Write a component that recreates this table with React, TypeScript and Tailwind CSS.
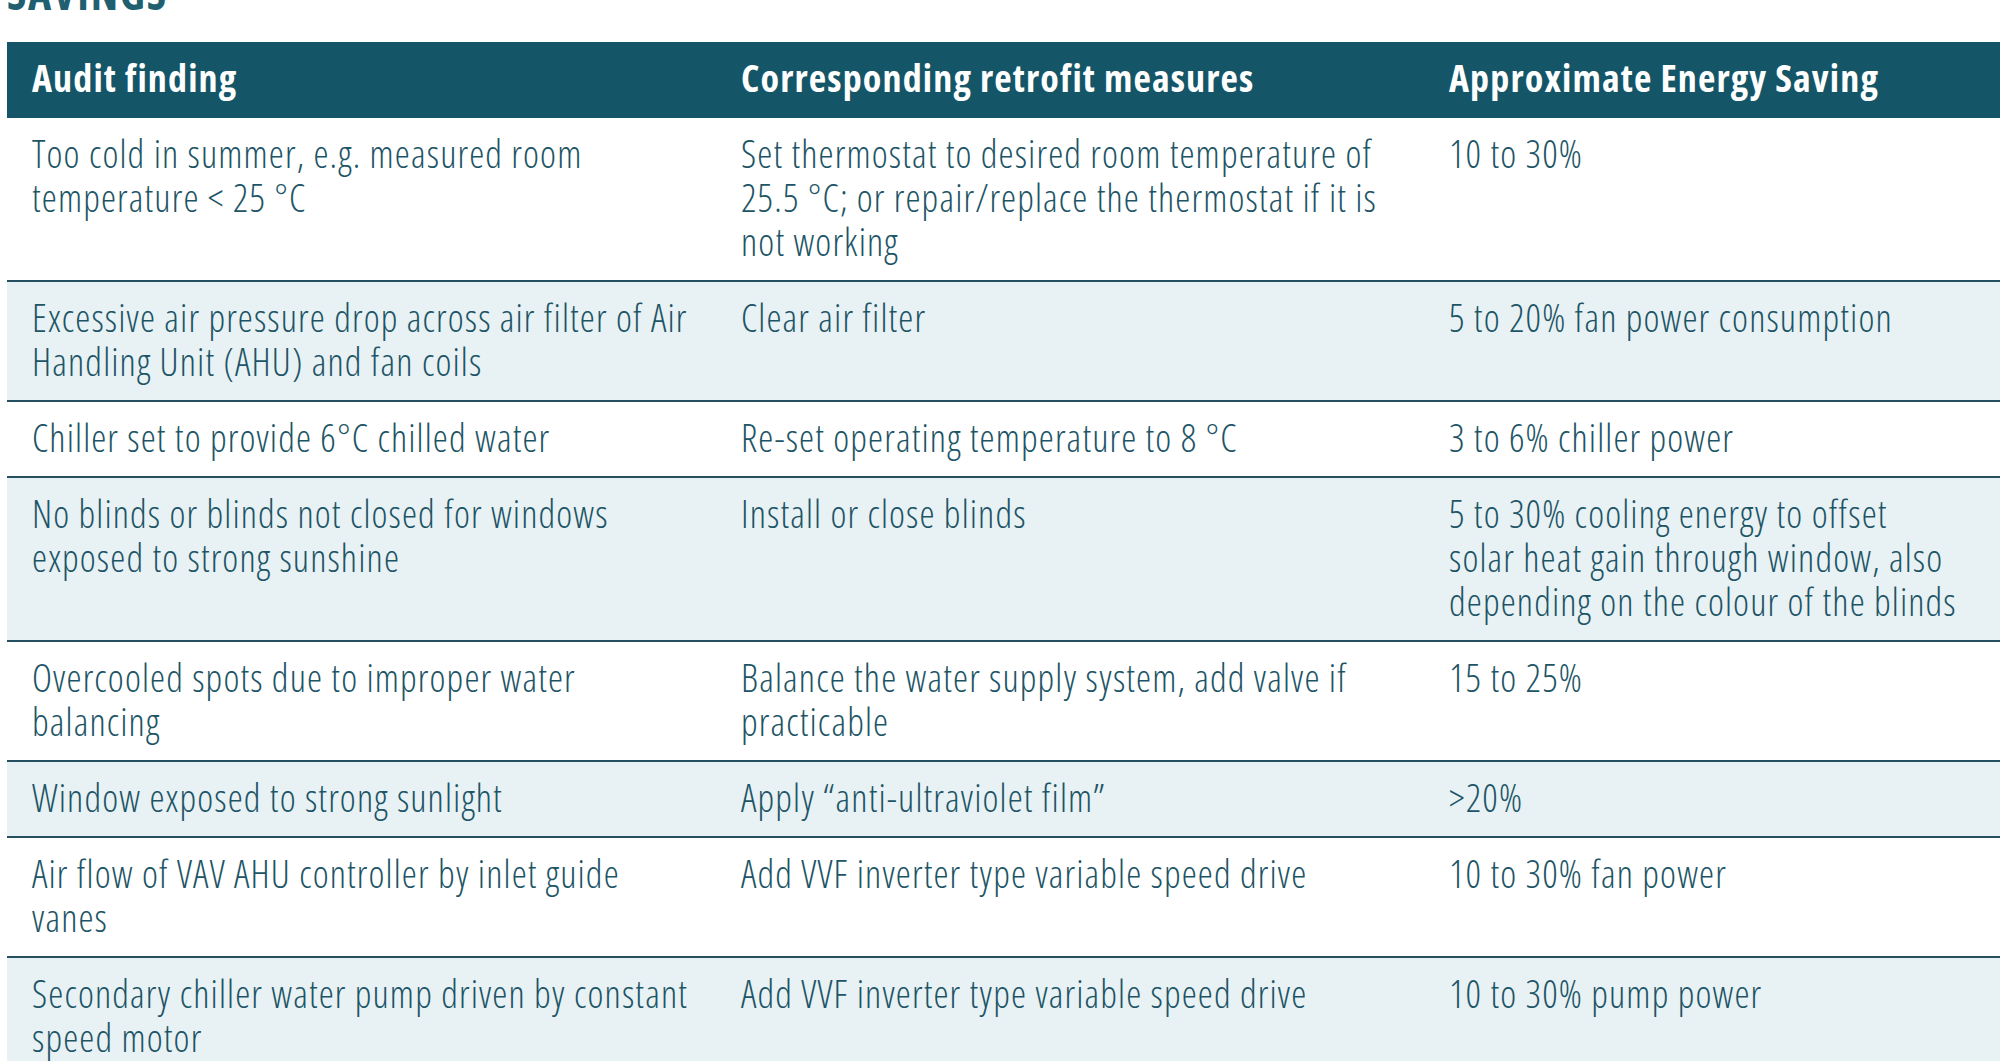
import React from "react";

interface Row {
  finding: string[];
  measure: string[];
  saving: string[];
}

const rows: Row[] = [
  {
    finding: ["Too cold in summer, e.g. measured room", "temperature < 25 °C"],
    measure: [
      "Set thermostat to desired room temperature of",
      "25.5 °C; or repair/replace the thermostat if it is",
      "not working",
    ],
    saving: ["10 to 30%"],
  },
  {
    finding: [
      "Excessive air pressure drop across air filter of Air",
      "Handling Unit (AHU) and fan coils",
    ],
    measure: ["Clear air filter"],
    saving: ["5 to 20% fan power consumption"],
  },
  {
    finding: ["Chiller set to provide 6°C chilled water"],
    measure: ["Re-set operating temperature to 8 °C"],
    saving: ["3 to 6% chiller power"],
  },
  {
    finding: ["No blinds or blinds not closed for windows", "exposed to strong sunshine"],
    measure: ["Install or close blinds"],
    saving: [
      "5 to 30% cooling energy to offset",
      "solar heat gain through window, also",
      "depending on the colour of the blinds",
    ],
  },
  {
    finding: ["Overcooled spots due to improper water", "balancing"],
    measure: ["Balance the water supply system, add valve if", "practicable"],
    saving: ["15 to 25%"],
  },
  {
    finding: ["Window exposed to strong sunlight"],
    measure: ["Apply \u201canti-ultraviolet film\u201d"],
    saving: [">20%"],
  },
  {
    finding: ["Air flow of VAV AHU controller by inlet guide", "vanes"],
    measure: ["Add VVF inverter type variable speed drive"],
    saving: ["10 to 30% fan power"],
  },
  {
    finding: ["Secondary chiller water pump driven by constant", "speed motor"],
    measure: ["Add VVF inverter type variable speed drive"],
    saving: ["10 to 30% pump power"],
  },
];

const Lines = ({ lines }: { lines: string[] }) => (
  <>
    {lines.map((line, i) => (
      <span key={i} className="block whitespace-nowrap">
        {line}
      </span>
    ))}
  </>
);

export default function App() {
  return (
    <div className="h-screen w-screen overflow-hidden bg-white font-['Open_Sans',sans-serif] font-stretch-condensed text-[#1d5566]">
      <div className="pl-[7px]">
        <h2 className="-mt-[29px] mb-[27px] text-[44px] font-bold uppercase leading-none tracking-[0.04em] text-[#1f5f70]">
          Savings
        </h2>

        <table className="w-[2127px] table-fixed border-collapse text-left">
          <colgroup>
            <col className="w-[709px]" />
            <col className="w-[709px]" />
            <col className="w-[709px]" />
          </colgroup>
          <thead>
            <tr className="h-[76px] bg-[#145668] text-white">
              <th className="pb-[7px] pl-[25px] align-middle text-[38px] font-bold leading-[44px] tracking-[0.03em]">
                Audit finding
              </th>
              <th className="pb-[7px] pl-[25px] align-middle text-[38px] font-bold leading-[44px] tracking-[0.03em]">
                Corresponding retrofit measures
              </th>
              <th className="pb-[7px] pl-[24px] align-middle text-[38px] font-bold leading-[44px] tracking-[0.03em]">
                Approximate Energy Saving
              </th>
            </tr>
          </thead>
          <tbody>
            {rows.map((row, i) => (
              <tr
                key={i}
                className={`border-b-2 border-[#24505f] ${
                  i % 2 === 1 ? "bg-[#e8f1f4]" : "bg-white"
                }`}
              >
                <td className="pb-[17px] pl-[25px] pr-[12px] pt-[13px] align-top text-[38px] font-light leading-[44px] tracking-[0.03em]">
                  <Lines lines={row.finding} />
                </td>
                <td className="pb-[17px] pl-[25px] pr-[12px] pt-[13px] align-top text-[38px] font-light leading-[44px] tracking-[0.03em]">
                  <Lines lines={row.measure} />
                </td>
                <td className="pb-[17px] pl-[24px] pr-[12px] pt-[13px] align-top text-[38px] font-light leading-[44px] tracking-[0.03em]">
                  <Lines lines={row.saving} />
                </td>
              </tr>
            ))}
          </tbody>
        </table>
      </div>
    </div>
  );
}
